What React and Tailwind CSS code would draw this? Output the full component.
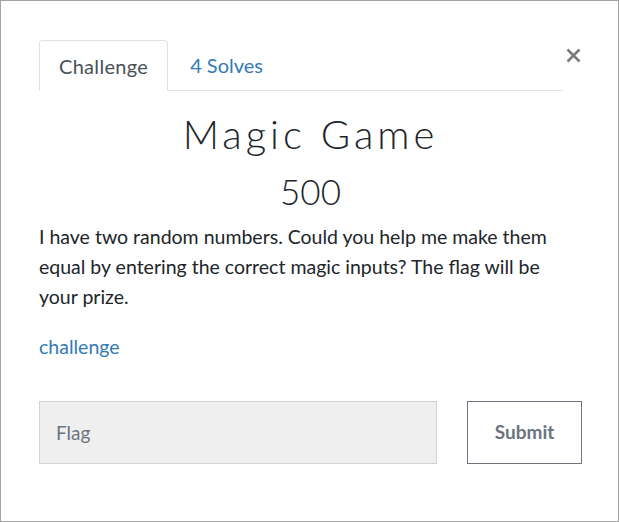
import React from 'react';

const ChallengeModal = () => {
    return (
        <div className="w-[619px] h-[522px] border border-[#a3a3a3] bg-white font-['Lato',sans-serif] text-[#212529]">
            <div className="pl-[38px] pr-[36px] pt-[39px]">
                {/* Tabs + close */}
                <div className="flex items-start">
                    <div className="flex flex-1 border-b border-[#dee2e6] h-[51px]">
                        <div className="h-[51px] -mb-px px-[19px] border border-[#dee2e6] border-b-white rounded-t-[4px] bg-white flex items-center text-[20px] tracking-[0.3px] text-[#495057]">
                            Challenge
                        </div>
                        <div className="h-[50px] pl-[22px] flex items-center text-[20px] text-[#337ab7]">
                            4 Solves
                        </div>
                    </div>
                    <button className="w-[18px] ml-[1px] mt-[8px] flex justify-end" type="button">
                        <svg width="15" height="15" viewBox="0 0 15 15" className="mr-[1px]">
                            <path d="M1.5 1.5 L13.5 13.5 M13.5 1.5 L1.5 13.5" stroke="#7b7b7b" strokeWidth="2.6" strokeLinecap="butt" />
                        </svg>
                    </button>
                </div>

                {/* Title */}
                <h2 className="mt-[19px] text-center text-[40px] leading-[48px] font-light tracking-[4px]">
                    Magic Game
                </h2>
                <h3 className="mt-[12px] text-center text-[35px] leading-[43px] font-light">500</h3>

                {/* Description */}
                <p className="mt-[9px] text-[19.5px] leading-[30px] pr-[10px]">
                    I have two random numbers. Could you help me make them equal by entering the correct magic inputs? The flag will be your prize.
                </p>
                <p className="mt-[20px] text-[19.5px] leading-[30px]">
                    <a className="text-[#337ab7]" href="#">challenge</a>
                </p>

                {/* Flag form */}
                <div className="mt-[39px] flex items-center justify-between">
                    <input
                        className="w-[398px] h-[63px] px-[16px] bg-[#efefef] border border-[#ccd3db] text-[19px] placeholder-[#6c757d] outline-none"
                        placeholder="Flag"
                    />
                    <button
                        type="button"
                        className="w-[115px] h-[63px] border border-[#6c757d] bg-white text-[#6c757d] text-[19px] font-bold"
                    >
                        Submit
                    </button>
                </div>
            </div>
        </div>
    );
};

export default function App() {
    return <ChallengeModal />;
}
